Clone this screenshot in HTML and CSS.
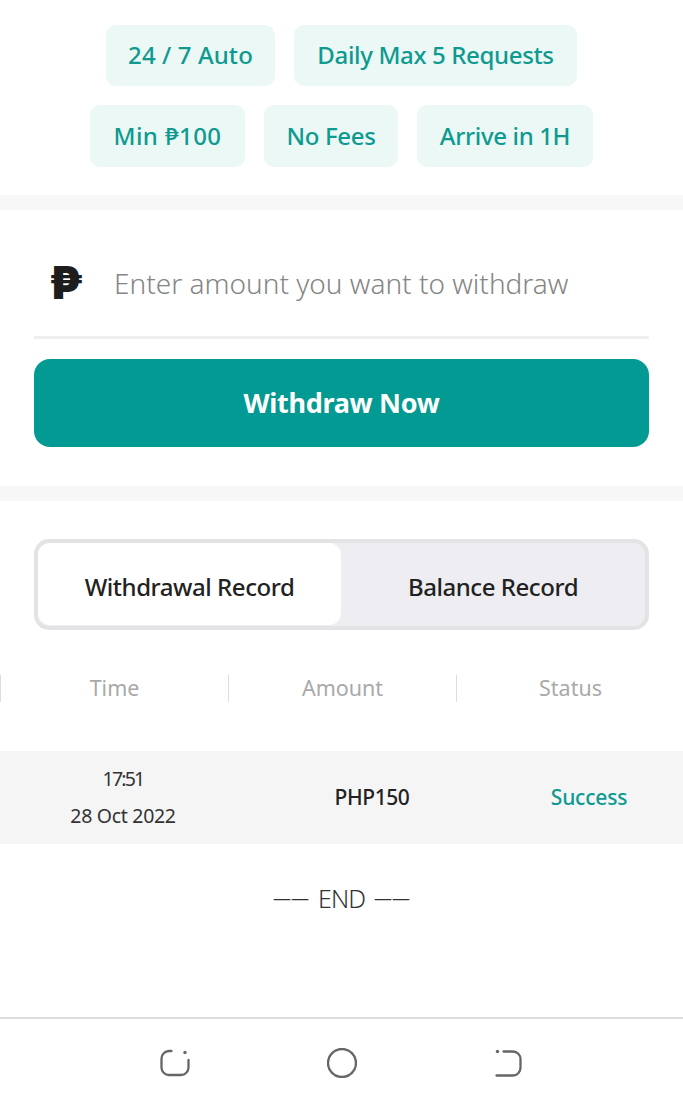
FILE: index.html
```html
<!DOCTYPE html>
<html lang="en">
<head>
<meta charset="utf-8">
<title>Withdraw</title>
<link rel="stylesheet" href="styles.css">
</head>
<body>
<div class="page">
  <main class="content">
    <section class="chips">
      <div class="chip-row">
        <span class="chip chip-auto">24 / 7 Auto</span>
        <span class="chip chip-daily">Daily Max 5 Requests</span>
      </div>
      <div class="chip-row">
        <span class="chip chip-min">Min ₱100</span>
        <span class="chip chip-fees">No Fees</span>
        <span class="chip chip-arrive">Arrive in 1H</span>
      </div>
    </section>
    <section class="form">
      <div class="amount">
        <span class="peso">₱</span>
        <span class="placeholder">Enter amount you want to withdraw</span>
      </div>
      <button class="submit" type="button">Withdraw Now</button>
    </section>
    <section class="records">
      <div class="tabs">
        <div class="tab tab-active">Withdrawal Record</div>
        <div class="tab">Balance Record</div>
      </div>
      <div class="table-head">
        <div class="th">Time</div>
        <div class="th">Amount</div>
        <div class="th">Status</div>
      </div>
      <div class="table-row">
        <div class="when"><span class="clock">17:51</span><span>28 Oct 2022</span></div>
        <div class="sum">PHP150</div>
        <div class="state">Success</div>
      </div>
      <div class="end"><span class="dash">——</span><span>END</span><span class="dash">——</span></div>
    </section>
  </main>
  <nav class="navbar">
    <svg class="nav-icon" width="30" height="30" viewBox="0 0 30 30" fill="none" stroke="#666" stroke-width="2.300" stroke-linecap="round">
      <path d="M11.500 3H9A7.500 7.500 0 0 0 1.500 10.500V19.500A7.500 7.500 0 0 0 9 27H21a7.500 7.500 0 0 0 7.500-7.500V12"/>
      <circle cx="25" cy="4.500" r="1.700" fill="#666" stroke="none"/>
    </svg>
    <svg class="nav-icon" width="30" height="30" viewBox="0 0 30 30" fill="none" stroke="#666" stroke-width="2.400">
      <circle cx="15" cy="15" r="14"/>
    </svg>
    <svg class="nav-icon" width="30" height="30" viewBox="0 0 30 30" fill="none" stroke="#666" stroke-width="2.300" stroke-linecap="round">
      <path d="M9.500 3.500H19a7.500 7.500 0 0 1 7.500 7.500V20a7.500 7.500 0 0 1-7.500 7.500H2.500"/>
      <circle cx="3.500" cy="3.500" r="1.700" fill="#666" stroke="none"/>
    </svg>
  </nav>
</div>
</body>
</html>
```
FILE: styles.css
```css
* { box-sizing: border-box; }
html, body { margin: 0; padding: 0; background: #fff; }
body { font-family: "Noto Sans", "DejaVu Sans", sans-serif; color: #222; }
.page { width: 683px; height: 1106px; display: flex; flex-direction: column; overflow: hidden; }
.content { flex: 1; }

.chips { padding: 25px 0 28px; display: flex; flex-direction: column; gap: 19px; border-bottom: 15px solid #f7f7f7; height: 210px; }
.chip-row { display: flex; justify-content: center; gap: 19px; }
.chip { height: 61px; padding-bottom: 2px; display: flex; align-items: center; justify-content: center; background: #ebf8f5; border-radius: 10px; color: #0e9a90; font-size: 24px; font-weight: 500; letter-spacing: -0.35px; }
.chip-row + .chip-row .chip { height: 62px; }
.chip-auto { width: 169px; letter-spacing: 0.1px; }
.chip-daily { width: 283px; }
.chip-min { width: 155px; letter-spacing: 0.4px; }
.chip-fees { width: 134px; }
.chip-arrive { width: 176px; }

.form { padding: 0 34px 39px; border-bottom: 15px solid #f7f7f7; }
.amount { height: 129px; display: flex; align-items: center; gap: 25px; border-bottom: 3px solid #eeeeee; padding: 19px 0 0 15px; }
.peso { width: 40px; font-family: "Inter", "DejaVu Sans", sans-serif; font-size: 45px; font-weight: 900; color: #1d1d1d; line-height: 1; }
.placeholder { font-size: 28px; font-weight: 300; color: #858585; white-space: nowrap; }
.submit { display: block; width: 615px; height: 88px; margin-top: 20px; padding-bottom: 3px; border: 0; border-radius: 16px; background: #029a93; color: #fff; font-family: inherit; font-size: 27px; font-weight: 700; letter-spacing: -0.3px; }

.records { padding-top: 38px; }
.tabs { width: 615px; height: 91px; margin: 0 34px; display: flex; background: #eeeef2; border: 4px solid #e3e3e5; border-radius: 15px; }
.tab { flex: 1; display: flex; align-items: center; justify-content: center; padding-top: 3px; font-size: 24px; font-weight: 500; letter-spacing: -0.45px; color: #222; }
.tab-active { flex: 0 0 303px; background: #fff; border-radius: 12px; margin-bottom: 1px; padding-top: 4px; }

.table-head { display: grid; grid-template-columns: repeat(3, 228px); margin-top: 45px; }
.th { height: 27px; padding-bottom: 2px; display: flex; align-items: center; justify-content: center; font-size: 21.500px; color: #a9a9a9; border-left: 1px solid #dddddd; }

.table-row { height: 93px; margin-top: 49px; padding-bottom: 2px; display: grid; grid-template-columns: 246px 252px 182px; align-items: center; text-align: center; background: #f5f5f5; }
.when { display: flex; flex-direction: column; gap: 9px; padding-top: 2px; font-size: 19.500px; line-height: 28px; letter-spacing: -0.3px; color: #333; }
.clock { letter-spacing: -1.800px; }
.sum { font-size: 21px; font-weight: 500; letter-spacing: -0.4px; color: #222; }
.state { font-size: 21px; font-weight: 500; letter-spacing: -0.2px; color: #0e9a90; }
.end { margin-top: 34px; display: flex; justify-content: center; align-items: center; gap: 9px; font-size: 25px; line-height: 40px; letter-spacing: -1px; font-weight: 300; color: #333; }
.dash { font-size: 18px; letter-spacing: 0; font-weight: 400; }

.navbar { height: 89px; flex: none; display: flex; justify-content: center; align-items: center; gap: 137px; border-top: 2px solid #dddddd; }
.nav-icon { flex: none; }
```
